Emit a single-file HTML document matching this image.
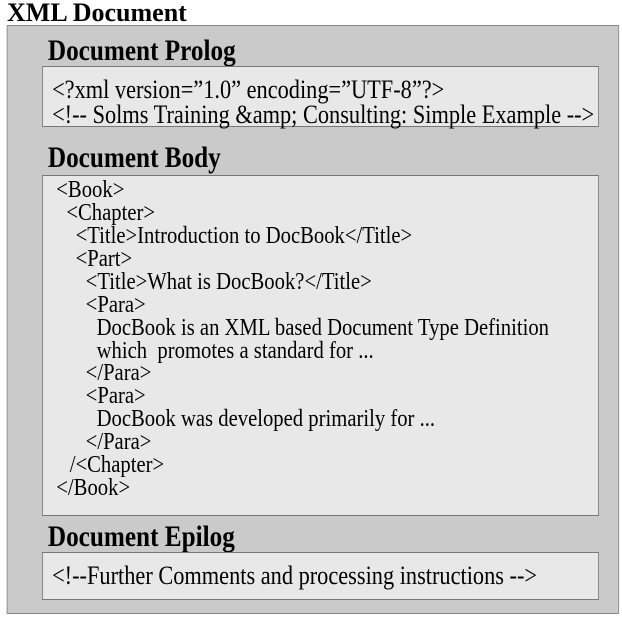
<!DOCTYPE html>
<html><head><meta charset="utf-8"><style>
body{margin:0;background:#fff;width:622px;height:617px;overflow:hidden;}
#w{position:absolute;left:0;top:0;width:740px;height:617px;transform:scaleX(0.84);transform-origin:0 0;font-family:"Liberation Serif",serif;color:#000;}
#w div{position:absolute;line-height:1;white-space:pre;}
.h{font-weight:bold;font-size:30px;}
.bx{background:#e8e8e8;border:1px solid #777;}
.p{font-size:26.6px;}
.b{font-size:24.6px;}
#t{position:absolute;left:7px;top:0px;font-family:"Liberation Serif",serif;font-weight:bold;font-size:26px;line-height:1;white-space:pre;}
</style></head><body><div id="w">
<div style="left:8px;top:25px;width:727px;height:587px;background:#cacaca;border:1px solid #888;"></div>
<div class="h" style="left:57px;top:36px;">Document Prolog</div>
<div class="bx" style="left:50px;top:66px;width:661px;height:59px;"></div>
<div class="p" style="left:62px;top:76px;">&lt;?xml version=”1.0” encoding=”UTF-8”?&gt;</div>
<div class="p" style="left:62px;top:101px;">&lt;!-- Solms Training &amp;amp; Consulting: Simple Example --&gt;</div>
<div class="h" style="left:57px;top:143px;">Document Body</div>
<div class="bx" style="left:50px;top:175px;width:661px;height:339px;"></div>
<div class="b" style="left:67px;top:178px;">&lt;Book&gt;</div>
<div class="b" style="left:79px;top:201px;">&lt;Chapter&gt;</div>
<div class="b" style="left:90px;top:224px;">&lt;Title&gt;Introduction to DocBook&lt;/Title&gt;</div>
<div class="b" style="left:90px;top:247px;">&lt;Part&gt;</div>
<div class="b" style="left:102px;top:270px;">&lt;Title&gt;What is DocBook?&lt;/Title&gt;</div>
<div class="b" style="left:102px;top:293px;">&lt;Para&gt;</div>
<div class="b" style="left:115px;top:316px;">DocBook is an XML based Document Type Definition</div>
<div class="b" style="left:115px;top:339px;">which  promotes a standard for ...</div>
<div class="b" style="left:102px;top:361px;">&lt;/Para&gt;</div>
<div class="b" style="left:102px;top:384px;">&lt;Para&gt;</div>
<div class="b" style="left:115px;top:407px;">DocBook was developed primarily for ...</div>
<div class="b" style="left:102px;top:430px;">&lt;/Para&gt;</div>
<div class="b" style="left:83px;top:453px;">/&lt;Chapter&gt;</div>
<div class="b" style="left:67px;top:476px;">&lt;/Book&gt;</div>
<div class="h" style="left:57px;top:522px;">Document Epilog</div>
<div class="bx" style="left:50px;top:552px;width:661px;height:46px;"></div>
<div class="p" style="left:62px;top:562px;">&lt;!--Further Comments and processing instructions --&gt;</div>
</div>
<div id="t">XML Document</div>
</body></html>
